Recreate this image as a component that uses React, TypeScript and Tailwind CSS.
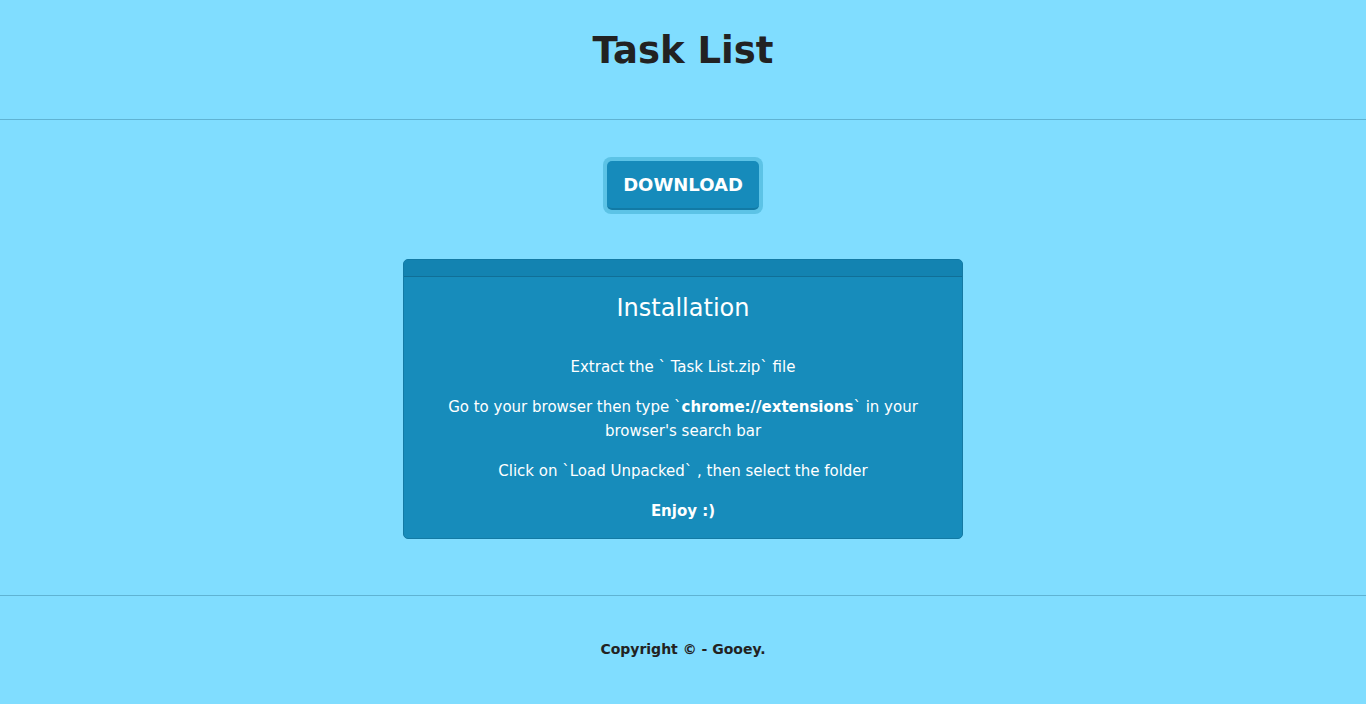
const font = "font-['Comic_Sans_MS','DejaVu_Sans',sans-serif]";

export default function App() {
  return (
    <div className={`min-h-[704px] bg-[#80ddff] text-[#222] ${font}`}>
      <header className="h-[120px] flex items-center justify-center border-b border-[#5fb3d3]">
        <h1 className="text-[37px] font-bold leading-none -mt-[18px]">Task List</h1>
      </header>

      <main className="flex flex-col items-center pt-[37px] pb-[56px] border-b border-[#5fb3d3]">
        <div className="p-[4px] rounded-[8px] bg-[#5cc3e6]">
          <button className="h-[49px] px-[16px] rounded-[5px] bg-[#168bbb] border-b-2 border-[#127aa5] text-white text-[18px] font-bold">
            DOWNLOAD
          </button>
        </div>

        <section className="mt-[45px] w-[560px] rounded-[5px] border border-[#137aa4] bg-[#178cbb] text-white text-center overflow-hidden">
          <div className="h-[17px] bg-[#1383b1] border-b border-[#106f97]"></div>
          <div className="px-[15px] pt-[14px] pb-[15px]">
            <h2 className="text-[24px] leading-[34px] mb-[30px]">Installation</h2>
            <div className="flex flex-col gap-[16px] text-[15px] leading-[24px]">
              <p>Extract the `&nbsp;Task List.zip` file</p>
              <p className="px-[20px]">
                Go to your browser then type `<b>chrome://extensions</b>` in your browser's search bar
              </p>
              <p>Click on `Load Unpacked` , then select the folder</p>
              <p className="font-bold">Enjoy :)</p>
            </div>
          </div>
        </section>
      </main>

      <footer className="h-[108px] flex items-center justify-center">
        <p className="text-[14px] font-bold -mt-[2px]">Copyright © - Gooey.</p>
      </footer>
    </div>
  );
}
